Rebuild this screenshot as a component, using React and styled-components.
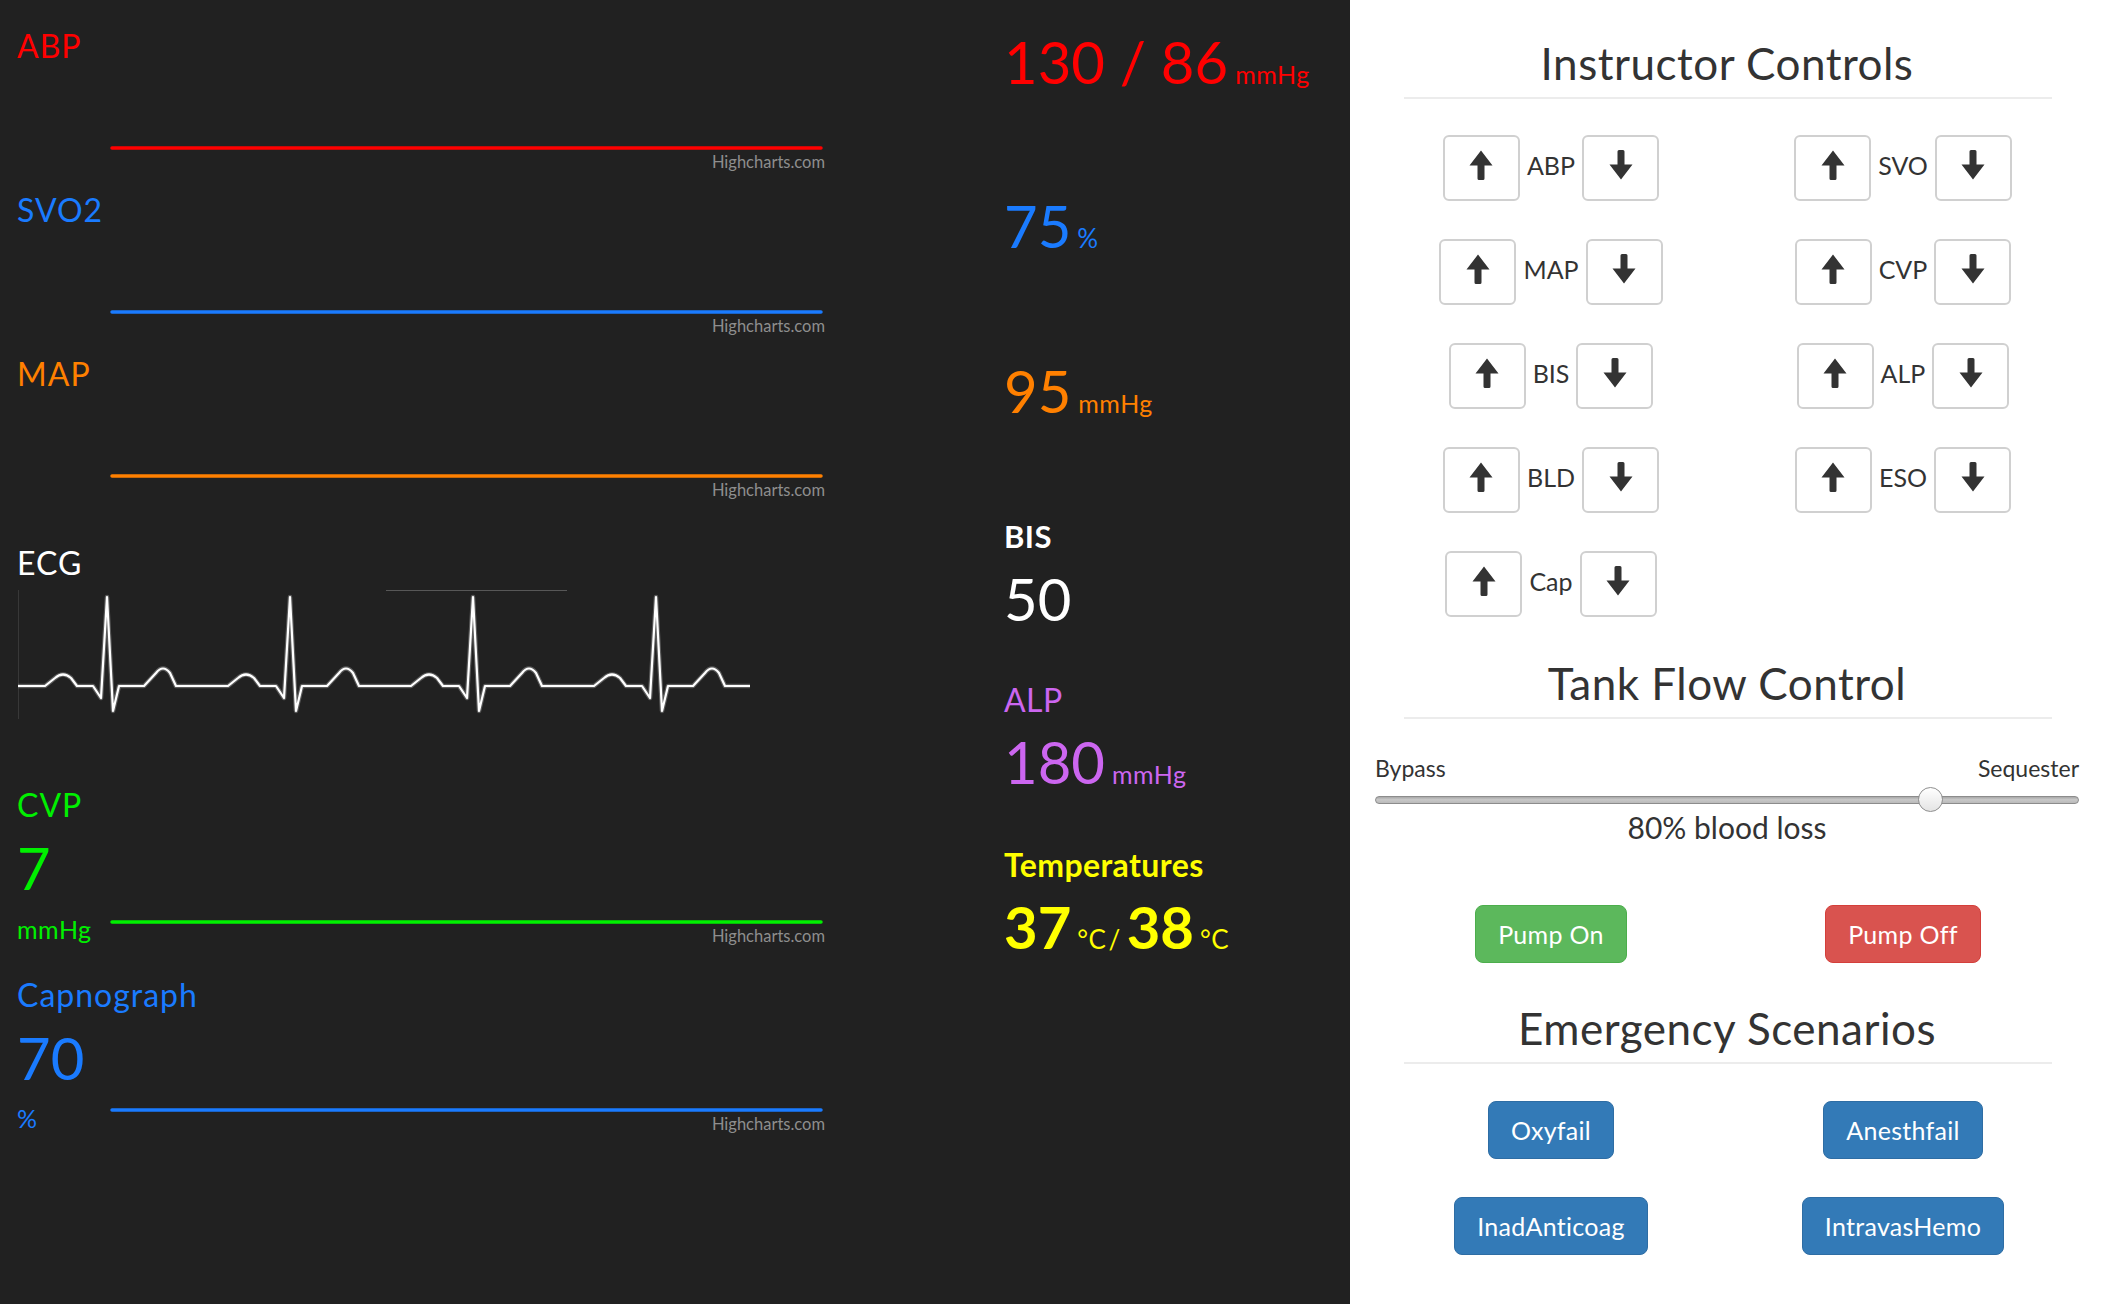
import React from 'react'
import styled, { createGlobalStyle } from 'styled-components'

const GlobalStyle = createGlobalStyle`
  html, body {
    margin: 0;
    padding: 0;
  }
  body {
    font-family: Lato, "Open Sans", sans-serif;
    background: #fff;
  }
`

const colors = {
  red: '#ff0000',
  blue: '#1a7bff',
  orange: '#ff8000',
  green: '#00f000',
  purple: '#cc66f0',
  yellow: '#ffff00',
  white: '#ffffff'
}

const Page = styled.div`
  display: flex;
  width: 2110px;
  height: 1304px;
  overflow: hidden;
`

const Monitor = styled.div`
  display: flex;
  width: 1350px;
  background: #212121;
`

const Waves = styled.div`
  display: flex;
  flex-direction: column;
  width: 987px;
  padding: 26px 0 0 17px;
`

const TraceBlock = styled.div`
  display: flex;
  flex-direction: column;
  height: 164px;
`

const TraceLabel = styled.div`
  margin-top: ${p => p.$mt || 0}px;
  font-size: 32px;
  line-height: 40px;
  letter-spacing: 1px;
  color: ${p => p.color};
`

const BigValue = styled.div`
  margin-top: ${p => p.$mt || 0}px;
  font-size: 58px;
  line-height: 64px;
  font-weight: ${p => (p.$bold ? 700 : 400)};
  color: ${p => p.color};
`

const UnitRow = styled.div`
  display: flex;
  margin-top: ${p => p.$mt}px;
`

const SideUnit = styled.div`
  width: 93px;
  font-size: 25px;
  line-height: 28px;
  letter-spacing: 0.5px;
  color: ${p => p.color};
`

const ChartArea = styled.div`
  width: 715px;
  margin-left: ${p => p.$indent || 0}px;
`

const Credits = styled.div`
  text-align: right;
  font-size: 16.5px;
  line-height: 18px;
  color: #8e8e8e;
`

const FlatChart = ({ color, height, indent }) => (
  <ChartArea $indent={indent}>
    <svg width="715" height={height} style={{ display: 'block' }}>
      <line x1="2" y1={height - 5} x2="711" y2={height - 5} stroke={color} strokeWidth="3.5" strokeLinecap="round" />
    </svg>
    <Credits>Highcharts.com</Credits>
  </ChartArea>
)

const EcgSvg = styled.svg`
  display: block;
  margin-top: 7px;
`

const ecgPath = () => {
  const b = 686
  let d = `M18 ${b}`
  ;[107, 290, 473, 656].forEach(r => {
    d += ` L${r - 62} ${b} L${r - 52} 678 Q${r - 44} 671 ${r - 36} 678 L${r - 30} ${b}`
    d += ` L${r - 14} ${b} L${r - 6} 698 L${r} 597 L${r + 6} 711 L${r + 12} ${b}`
    d += ` L${r + 37} ${b} L${r + 49} 673 Q${r + 56} 664 ${r + 63} 673 L${r + 69} ${b}`
  })
  return d + ` L750 ${b}`
}

const Ecg = () => (
  <EcgSvg width="740" height="130" viewBox="17 590 740 130">
    <line x1="18.5" y1="590" x2="18.5" y2="719" stroke="#383838" strokeWidth="1" />
    <line x1="386" y1="590" x2="567" y2="590" stroke="#6a6a6a" strokeWidth="1.5" />
    <path d={ecgPath()} fill="none" stroke="#8a8a8a" strokeOpacity="0.55" strokeWidth="4.5" strokeLinejoin="round" />
    <path d={ecgPath()} fill="none" stroke="#ffffff" strokeWidth="2.2" strokeLinejoin="round" />
  </EcgSvg>
)

const Readouts = styled.div`
  display: flex;
  flex-direction: column;
  flex: 1;
  padding-top: 30px;
`

const ValueRow = styled.div`
  display: flex;
  align-items: baseline;
  margin-top: ${p => p.$mt || 0}px;
  color: ${p => p.color};
`

const Num = styled.span`
  font-size: 58px;
  line-height: 64px;
  font-weight: ${p => (p.$bold ? 700 : 400)};
`

const Unit = styled.span`
  margin-left: ${p => (p.$ml === undefined ? 7 : p.$ml)}px;
  margin-right: ${p => p.$mr || 0}px;
  font-size: ${p => p.$size || 25}px;
  letter-spacing: 0.5px;
  font-weight: ${p => (p.$bold ? 700 : 400)};
`

const ReadLabel = styled.div`
  margin-top: ${p => p.$mt}px;
  font-size: ${p => p.$size}px;
  line-height: 36px;
  letter-spacing: 0.4px;
  font-weight: ${p => (p.$bold ? 700 : 400)};
  color: ${p => p.color};
`

const Controls = styled.div`
  width: 760px;
  box-sizing: border-box;
  padding: 0 31px 0 25px;
  background: #fff;
  color: #333;
`

const SectionTitle = styled.h2`
  margin: ${p => p.$mt}px 0 0;
  font-size: 44px;
  line-height: 47px;
  letter-spacing: 0.5px;
  font-weight: 400;
  text-align: center;
`

const Rule = styled.hr`
  margin: 10px 27px 0 29px;
  border: 0;
  border-top: 2px solid #ececec;
`

const TwoCols = styled.div`
  display: grid;
  grid-template-columns: 1fr 1fr;
  row-gap: 38px;
  margin-top: ${p => p.$mt}px;
  justify-items: center;
`

const Adjuster = styled.div`
  display: flex;
  align-items: center;
  gap: 7px;
  height: 66px;
`

const ArrowButton = styled.button`
  display: flex;
  justify-content: center;
  align-items: flex-start;
  width: 77px;
  height: 66px;
  padding: 13px 0 0;
  box-sizing: border-box;
  background: #fff;
  border: 2px solid #d0d0d0;
  border-radius: 6px;
  cursor: pointer;
`

const AdjustLabel = styled.span`
  font-size: 25px;
  color: #333;
  margin-top: -7px;
`

const Arrow = ({ down }) => (
  <svg width="24" height="30" viewBox="0 0 24 30" style={down ? { transform: 'rotate(180deg)' } : undefined}>
    <path
      d="M12 0.5 L23.5 15.5 L15.5 15.5 L15.5 28.5 Q15.5 30 14 30 L10 30 Q8.5 30 8.5 28.5 L8.5 15.5 L0.5 15.5 Z"
      fill="#333"
    />
  </svg>
)

const AdjustControl = ({ label }) => (
  <Adjuster>
    <ArrowButton><Arrow /></ArrowButton>
    <AdjustLabel>{label}</AdjustLabel>
    <ArrowButton><Arrow down /></ArrowButton>
  </Adjuster>
)

const SliderLabels = styled.div`
  display: flex;
  justify-content: space-between;
  margin-top: 35px;
  font-size: 23px;
  line-height: 28px;
`

const Track = styled.div`
  position: relative;
  height: 8px;
  margin-top: 14px;
  box-sizing: border-box;
  border: 1px solid #8c8c8c;
  border-radius: 4px;
  background: linear-gradient(#a8a8a8, #c8c8c8 45%, #bababa);
`

const Thumb = styled.div`
  position: absolute;
  top: -10px;
  left: calc(${p => p.$pct} * (100% - 25px));
  width: 25px;
  height: 25px;
  box-sizing: border-box;
  border: 1px solid #8f8f8f;
  border-radius: 50%;
  background: linear-gradient(#ffffff, #e4e4e4);
`

const SliderValue = styled.div`
  margin-top: 6px;
  font-size: 30px;
  line-height: 34px;
  text-align: center;
`

const palette = {
  success: ['#5cb85c', '#4cae4c'],
  danger: ['#d9534f', '#d43f3a'],
  primary: ['#337ab7', '#2e6da4']
}

const ActionButton = styled.button`
  padding: 12px 22px;
  font-family: Lato, "Open Sans", sans-serif;
  font-size: 25px;
  line-height: 32px;
  letter-spacing: 0.3px;
  color: #fff;
  background: ${p => palette[p.$kind][0]};
  border: 1px solid ${p => palette[p.$kind][1]};
  border-radius: 8px;
  cursor: pointer;
`

const adjusters = [
  ['ABP', 'SVO'],
  ['MAP', 'CVP'],
  ['BIS', 'ALP'],
  ['BLD', 'ESO'],
  ['Cap', null]
]

export default function App() {
  return (
    <>
      <GlobalStyle />
      <Page>
        <Monitor>
          <Waves>
            <TraceBlock>
              <TraceLabel color={colors.red}>ABP</TraceLabel>
              <FlatChart color={colors.red} height={87} indent={93} />
            </TraceBlock>
            <TraceBlock>
              <TraceLabel color={colors.blue}>SVO2</TraceLabel>
              <FlatChart color={colors.blue} height={87} indent={93} />
            </TraceBlock>
            <TraceBlock>
              <TraceLabel color={colors.orange}>MAP</TraceLabel>
              <FlatChart color={colors.orange} height={87} indent={93} />
            </TraceBlock>

            <TraceLabel color={colors.white} $mt={25}>ECG</TraceLabel>
            <Ecg />

            <TraceLabel color={colors.green} $mt={65}>CVP</TraceLabel>
            <BigValue color={colors.green} $mt={11}>7</BigValue>
            <UnitRow $mt={15}>
              <SideUnit color={colors.green}>mmHg</SideUnit>
              <FlatChart color={colors.green} height={12} />
            </UnitRow>

            <TraceLabel color={colors.blue} $mt={30}>Capnograph</TraceLabel>
            <BigValue color={colors.blue} $mt={11}>70</BigValue>
            <UnitRow $mt={14}>
              <SideUnit color={colors.blue}>%</SideUnit>
              <FlatChart color={colors.blue} height={11} />
            </UnitRow>
          </Waves>

          <Readouts>
            <ValueRow color={colors.red}>
              <Num>130 / 86</Num>
              <Unit>mmHg</Unit>
            </ValueRow>
            <ValueRow color={colors.blue} $mt={100}>
              <Num>75</Num>
              <Unit $size={26} $ml={6}>%</Unit>
            </ValueRow>
            <ValueRow color={colors.orange} $mt={101}>
              <Num>95</Num>
              <Unit>mmHg</Unit>
            </ValueRow>

            <ReadLabel color={colors.white} $mt={95} $size={31} $bold>BIS</ReadLabel>
            <ValueRow color={colors.white} $mt={13}>
              <Num>50</Num>
            </ValueRow>

            <ReadLabel color={colors.purple} $mt={51} $size={32}>ALP</ReadLabel>
            <ValueRow color={colors.purple} $mt={12}>
              <Num>180</Num>
              <Unit>mmHg</Unit>
            </ValueRow>

            <ReadLabel color={colors.yellow} $mt={53} $size={32} $bold>Temperatures</ReadLabel>
            <ValueRow color={colors.yellow} $mt={12}>
              <Num $bold>37</Num>
              <Unit $size={26} $ml={6}>°C</Unit>
              <Unit $size={26} $ml={2} $mr={6}>/</Unit>
              <Num $bold>38</Num>
              <Unit $size={26} $ml={6}>°C</Unit>
            </ValueRow>
          </Readouts>
        </Monitor>

        <Controls>
          <SectionTitle $mt={40}>Instructor Controls</SectionTitle>
          <Rule />
          <TwoCols $mt={36}>
            {adjusters.flat().map((label, i) =>
              label ? <AdjustControl key={label} label={label} /> : <div key={i} />
            )}
          </TwoCols>

          <SectionTitle $mt={43}>Tank Flow Control</SectionTitle>
          <Rule />
          <SliderLabels>
            <span>Bypass</span>
            <span>Sequester</span>
          </SliderLabels>
          <Track>
            <Thumb $pct={0.8} />
          </Track>
          <SliderValue>80% blood loss</SliderValue>

          <TwoCols $mt={61}>
            <ActionButton $kind="success">Pump On</ActionButton>
            <ActionButton $kind="danger">Pump Off</ActionButton>
          </TwoCols>

          <SectionTitle $mt={42}>Emergency Scenarios</SectionTitle>
          <Rule />
          <TwoCols $mt={37}>
            <ActionButton $kind="primary">Oxyfail</ActionButton>
            <ActionButton $kind="primary">Anesthfail</ActionButton>
            <ActionButton $kind="primary">InadAnticoag</ActionButton>
            <ActionButton $kind="primary">IntravasHemo</ActionButton>
          </TwoCols>
        </Controls>
      </Page>
    </>
  )
}
